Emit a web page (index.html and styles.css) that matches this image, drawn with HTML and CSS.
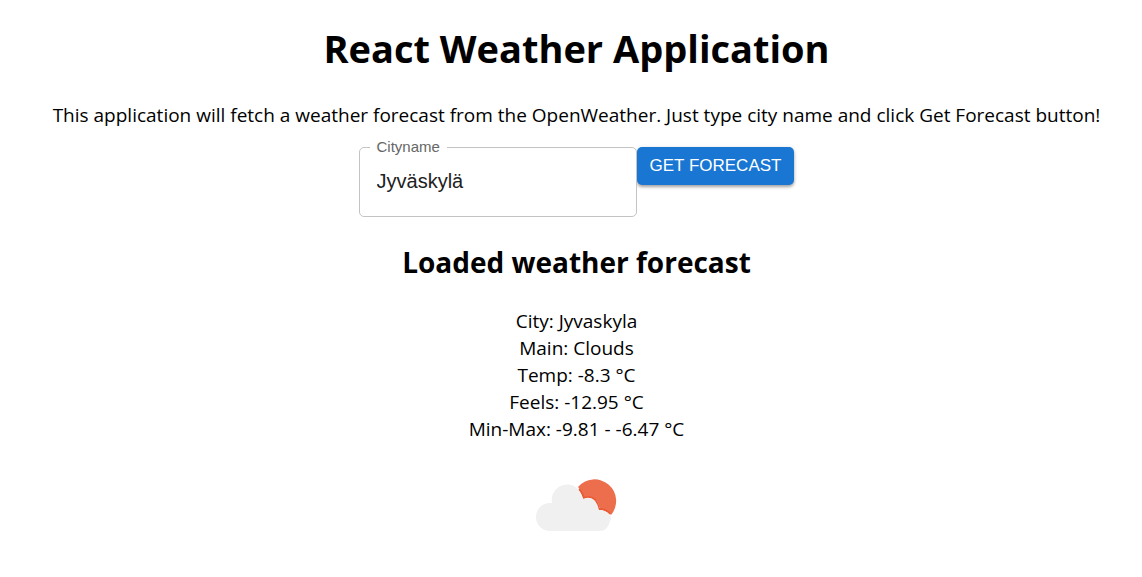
FILE: index.html
```html
<!DOCTYPE html>
<html lang="en">
<head>
<meta charset="utf-8">
<meta name="viewport" content="width=device-width, initial-scale=1">
<title>React Weather Application</title>
<link rel="stylesheet" href="styles.css">
</head>
<body>
<main class="app">
  <h1 class="title">React Weather Application</h1>
  <p class="intro">This application will fetch a weather forecast from the OpenWeather. Just type city name and click Get Forecast button!</p>
  <form class="search">
    <div class="field">
      <label class="field-label" for="city">Cityname</label>
      <input class="field-input" id="city" type="text" value="Jyväskylä">
    </div>
    <button class="button" type="button">GET FORECAST</button>
  </form>
  <section class="forecast">
    <h2 class="subtitle">Loaded weather forecast</h2>
    <ul class="details">
      <li>City: Jyvaskyla</li>
      <li>Main: Clouds</li>
      <li>Temp: -8.3 °C</li>
      <li>Feels: -12.95 °C</li>
      <li>Min-Max: -9.81 - -6.47 °C</li>
    </ul>
    <svg class="icon" viewBox="0 0 120 90" role="img" aria-label="Clouds">
      <path d="M61 27 A21.500 21.500 0 1 1 94 55 Q90 50 83 49 Q81 38 72 37 Q69 37 66 38 Q65 31 61 27 Z" fill="#ec6e4c"/>
      <path d="M62 29 Q65 32 67 38 Q79 34 82 49 Q89 49 93 54" fill="none" stroke="#ea5a34" stroke-width="2"/>
      <path d="M33 71 A14 14 0 0 1 33 43 L35 43 A15.500 15.500 0 0 1 60 28 Q64 32 66 39 Q78 34 82 50 Q89 50 93 55 Q95 58 93 61 Q91 71 82 71 Z" fill="#f0f0f0"/>
    </svg>
  </section>
</main>
</body>
</html>
```
FILE: styles.css
```css
* {
  box-sizing: border-box;
}

body {
  margin: 0;
  background: #fff;
  color: #000;
  font-family: "Segoe UI", "Open Sans", sans-serif;
  font-size: 19px;
  line-height: 27px;
}

.app {
  padding: 21px 0 22px 11px;
  text-align: center;
}

.title {
  margin: 0 0 27px;
  font-size: 38px;
  line-height: 54px;
}

.intro {
  margin: 0 0 18px;
}

.search {
  display: flex;
  justify-content: center;
  align-items: flex-start;
}

.field {
  position: relative;
  width: 278px;
}

.field-label {
  position: absolute;
  top: -10px;
  left: 11px;
  padding: 0 7px;
  background: #fff;
  color: #666;
  font: 15px/20px "Liberation Sans", sans-serif;
}

.field-input {
  display: block;
  width: 100%;
  height: 70px;
  padding: 0 17px 2px;
  border: 1px solid #c4c4c4;
  border-radius: 5px;
  background: #fff;
  color: #212121;
  font: 20px "Liberation Sans", sans-serif;
}

.button {
  padding: 8px 13px;
  border: 0;
  border-radius: 5px;
  background: #1976d2;
  box-shadow: 0 2px 3px rgba(0, 0, 0, 0.3), 0 1px 5px rgba(0, 0, 0, 0.12);
  color: #fff;
  font: 17px/22px "Liberation Sans", sans-serif;
}

.subtitle {
  margin: 25px 0 26px;
  font-size: 28px;
  line-height: 40px;
}

.details {
  margin: 0;
  padding: 0;
  list-style: none;
}

.icon {
  display: block;
  width: 120px;
  height: 90px;
  margin: 17px auto 0;
}
```
